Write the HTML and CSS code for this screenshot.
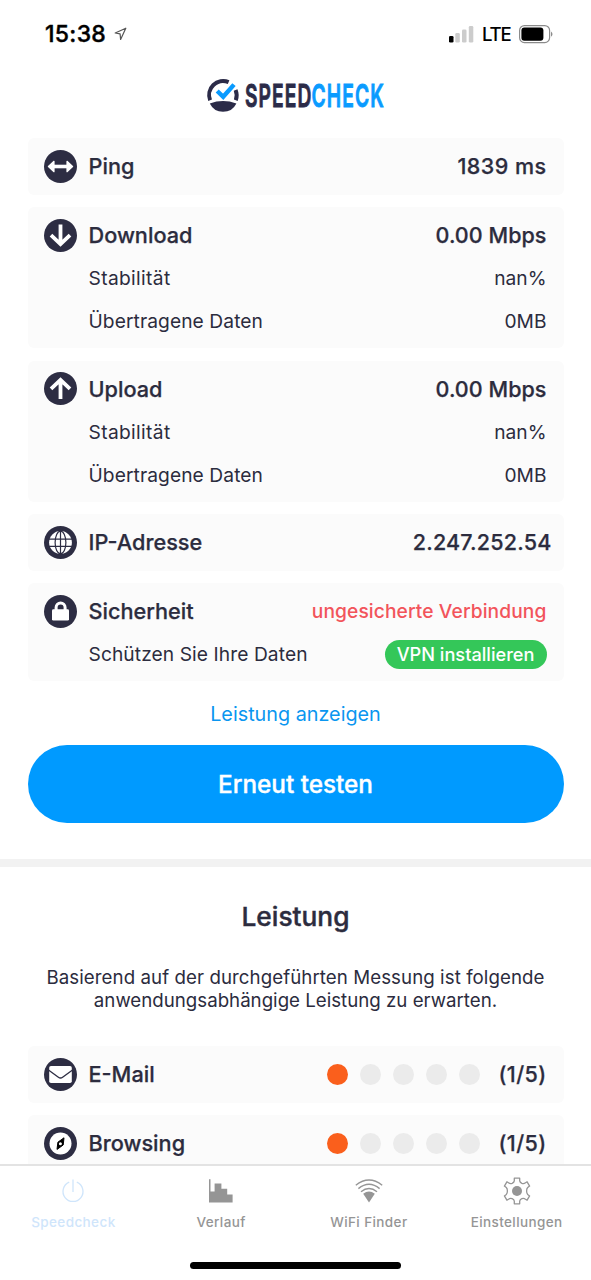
FILE: index.html
```html
<!DOCTYPE html>
<html lang="de">
<head>
<meta charset="utf-8">
<title>Speedcheck</title>
<link rel="stylesheet" href="styles.css">
</head>
<body>
<div class="screen">
  <div class="statusbar">
    <div class="status-left">
      <span class="clock">15:38</span>
      <svg class="location" viewBox="0 0 13 14" width="13" height="14"><path d="M11.8 1.2 1.2 6l4.9.9.5 5.6z" fill="none" stroke="#555" stroke-width="1.2" stroke-linejoin="round"/></svg>
    </div>
    <div class="status-right">
      <svg viewBox="0 0 27 18" width="27" height="18"><rect x="1" y="11" width="4.5" height="6.6" rx="1.3" fill="#000"/><g fill="#ccc"><rect x="7.3" y="8" width="4.5" height="9.6" rx="1.3"/><rect x="14" y="4.5" width="4.5" height="13.1" rx="1.3"/><rect x="20.8" y="1" width="4.5" height="16.6" rx="1.3"/></g></svg>
      <span class="carrier">LTE</span>
      <svg viewBox="0 0 36 20" width="36" height="20"><rect x="1.6" y="1.6" width="30" height="17" rx="4.8" fill="none" stroke="#8b8b8b" stroke-width="1.2"/><rect x="3.4" y="3.5" width="22" height="13.2" rx="3" fill="#000"/><path d="M33 7.4q3 2.7 0 5.4z" fill="#8b8b8b"/></svg>
    </div>
  </div>

  <div class="brand">
    <svg viewBox="0 0 180 36" width="180" height="36">
      <g fill="none" stroke="#2b2b48" stroke-width="4">
        <path d="M4.1 22.2A14 14 0 0 1 22.6 4.2"/>
        <path d="M29.6 12A14 14 0 0 1 29.8 22.2"/>
      </g>
      <path d="M3.8 25.4Q17 20.8 30.4 25.4Q26.3 33.8 17 33.8Q8 33.8 3.8 25.4Z" fill="#2b2b48"/>
      <path d="M11.2 13 17.2 18.8 28 6.6" fill="none" stroke="#0a9bff" stroke-width="4.4"/>
      <text class="wordmark dark" transform="translate(39 29) scale(.61 1)">SPEED</text>
      <text class="wordmark blue" transform="translate(105.500 29) scale(.61 1)">CHECK</text>
    </svg>
  </div>

  <main class="content">
    <section class="cards">
      <div class="card single">
        <div class="row head">
          <svg class="icon" viewBox="0 0 33 33"><circle cx="16.5" cy="16.5" r="16.5" fill="#2d2d43"/><path d="M8 16.5h17" stroke="#fff" stroke-width="3.6"/><path d="M4.4 16.5 10 11.3V21.7zM28.6 16.5 23 11.3V21.7z" fill="#fff" stroke="#fff" stroke-width="1.2" stroke-linejoin="round"/></svg>
          <span class="title">Ping</span><span class="value ms">1839 ms</span>
        </div>
      </div>
      <div class="card">
        <div class="row head">
          <svg class="icon" viewBox="0 0 33 33"><circle cx="16.5" cy="16.5" r="16.5" fill="#2d2d43"/><path d="M16.5 5.5V25M7 16.2l9.5 9 9.5-9" fill="none" stroke="#fff" stroke-width="3.8"/></svg>
          <span class="title">Download</span><span class="value">0.00 Mbps</span>
        </div>
        <div class="row sub"><span class="label stab">Stabilität</span><span class="detail">nan%</span></div>
        <div class="row sub"><span class="label data">Übertragene Daten</span><span class="detail">0MB</span></div>
      </div>
      <div class="card">
        <div class="row head">
          <svg class="icon" viewBox="0 0 33 33"><circle cx="16.5" cy="16.5" r="16.5" fill="#2d2d43"/><path d="M16.5 27V8M7 16.8l9.5-9 9.5 9" fill="none" stroke="#fff" stroke-width="3.8"/></svg>
          <span class="title">Upload</span><span class="value">0.00 Mbps</span>
        </div>
        <div class="row sub"><span class="label stab">Stabilität</span><span class="detail">nan%</span></div>
        <div class="row sub"><span class="label data">Übertragene Daten</span><span class="detail">0MB</span></div>
      </div>
      <div class="card single">
        <div class="row head">
          <svg class="icon" viewBox="0 0 33 33"><circle cx="16.5" cy="16.5" r="16.5" fill="#2d2d43"/><circle cx="16.5" cy="16.5" r="11.4" fill="#fff"/><g fill="none" stroke="#2d2d43" stroke-width="1.2"><path d="M16.5 5v23M5 13.1h23M5 20.3h23"/><ellipse cx="16.5" cy="16.5" rx="5.4" ry="11.4"/></g></svg>
          <span class="title">IP-Adresse</span><span class="value address">2.247.252.54</span>
        </div>
      </div>
      <div class="card">
        <div class="row head">
          <svg class="icon" viewBox="0 0 33 33"><circle cx="16.5" cy="16.5" r="16.5" fill="#2d2d43"/><rect x="8" y="14.2" width="17" height="11.4" rx="1.4" fill="#fff"/><path d="M12.1 15v-2.6a4.5 4.5 0 0 1 9 0V15" fill="none" stroke="#fff" stroke-width="3"/></svg>
          <span class="title">Sicherheit</span><span class="warning">ungesicherte Verbindung</span>
        </div>
        <div class="row sub"><span class="label data">Schützen Sie Ihre Daten</span><span class="pill">VPN installieren</span></div>
      </div>
    </section>
    <a class="link">Leistung anzeigen</a>
    <button class="cta">Erneut testen</button>
    <hr class="divider">
    <h2 class="heading">Leistung</h2>
    <p class="intro"><span class="line one">Basierend auf der durchgeführten Messung ist folgende</span><br><span class="line two">anwendungsabhängige Leistung zu erwarten.</span></p>
    <section class="cards">
      <div class="card single">
        <div class="row head">
          <svg class="icon" viewBox="0 0 33 33"><circle cx="16.5" cy="16.5" r="16.5" fill="#2d2d43"/><rect x="5.2" y="8" width="22.6" height="17" rx="1.8" fill="#fff"/><path d="M4.8 12.2 14.4 19.2q2.1 1.6 4.2 0L28.2 12.2" fill="none" stroke="#2d2d43" stroke-width="1.3"/></svg>
          <span class="title">E-Mail</span>
          <span class="dots"><i class="dot on"></i><i class="dot"></i><i class="dot"></i><i class="dot"></i><i class="dot"></i></span><span class="value score">(1/5)</span>
        </div>
      </div>
      <div class="card single">
        <div class="row head">
          <svg class="icon" viewBox="0 0 33 33"><circle cx="16.5" cy="16.5" r="16.5" fill="#2d2d43"/><circle cx="16.5" cy="16.5" r="11" fill="#fff"/><path d="M20 10.8 19.2 18 13 22.4 13.9 15.2z" fill="#000" stroke="#000" stroke-linejoin="round"/><circle cx="16.4" cy="16.8" r="1.5" fill="#fff"/></svg>
          <span class="title">Browsing</span>
          <span class="dots"><i class="dot on"></i><i class="dot"></i><i class="dot"></i><i class="dot"></i><i class="dot"></i></span><span class="value score">(1/5)</span>
        </div>
      </div>
    </section>
  </main>

  <nav class="tabbar">
    <div class="tabs">
      <div class="tab active">
        <svg class="tab-icon" viewBox="0 0 28 28"><path d="M10.2 5.2a10 10 0 1 0 7.6 0M14 2.5V15" fill="none" stroke="currentColor" stroke-width="1.3"/></svg>
        <span>Speedcheck</span>
      </div>
      <div class="tab">
        <svg class="tab-icon" viewBox="0 0 28 28"><path d="M2 2.2h1.500v12.300H7.600V6.600h6.800v5.200h5.800v5.600H25.600V25.600H2z" fill="currentColor"/></svg>
        <span>Verlauf</span>
      </div>
      <div class="tab">
        <svg class="tab-icon" viewBox="0 0 28 28"><g fill="none" stroke="currentColor" stroke-width="1.4"><path d="M.8 8.3Q14-2.2 27.2 8.3M3.4 11.6Q14 2.8 24.6 11.6M6 14.8Q14 8.2 22 14.8"/></g><path d="M8.200 16.800Q14 12.400 19.800 16.800L14 25.500z" fill="currentColor"/></svg>
        <span>WiFi Finder</span>
      </div>
      <div class="tab">
        <svg class="tab-icon" viewBox="0 0 28 28"><path d="M11.3 1.2h5.4v2.600q.2 1.600 2.200 2.500 1.900.8 3.200-.3l2-1.200 2.500 4.300-1.900 1.500q-1.100 1-1.100 3.400t1.100 3.400l1.900 1.500-2.500 4.300-2-1.200q-1.300-1.100-3.200-.3-2 .9-2.200 2.500v2.600h-5.400v-2.600q-.2-1.600-2.200-2.500-1.900-.8-3.200.3l-2 1.200-2.500-4.300 1.900-1.500q1.100-1 1.100-3.400t-1.100-3.400L1.400 9.100 3.900 4.800l2 1.200q1.300 1.100 3.200.3 2-.9 2.200-2.500z" fill="none" stroke="currentColor" stroke-width="1.3" stroke-linejoin="round"/><circle cx="14" cy="14" r="5" fill="currentColor"/></svg>
        <span>Einstellungen</span>
      </div>
    </div>
    <div class="home-indicator"></div>
  </nav>
</div>
</body>
</html>
```
FILE: styles.css
```css
* { box-sizing: border-box; }
body { margin: 0; background: #fff; font-family: Inter, "Liberation Sans", sans-serif; color: #2c2c3e; }
.screen { width: 591px; height: 1280px; display: flex; flex-direction: column; overflow: hidden; }

.statusbar { flex: none; height: 68px; padding: 0 37.5px 0 45px; display: flex; justify-content: space-between; align-items: center; color: #000; }
.status-left, .status-right { display: flex; align-items: center; }
.status-left { gap: 8px; }
.clock { font-size: 23px; font-weight: 500; letter-spacing: .3px; -webkit-text-stroke: .4px; }
.carrier { font-size: 18.6px; font-weight: 500; letter-spacing: -1.2px; margin: 0 8px 0 6.5px; }
.status-right svg:last-child { margin-left: -1px; }

.brand { flex: none; height: 70px; padding: 10px 0 0 206px; }
.brand svg { display: block; }
.wordmark { font-family: Inter, sans-serif; font-weight: 600; font-size: 31.5px; stroke-width: .9px; letter-spacing: 1.8px; }
.wordmark.dark { fill: #2b2b48; stroke: #2b2b48; }
.wordmark.blue { fill: #0a9bff; stroke: #0a9bff; }

.content { flex: 1; min-height: 0; overflow: hidden; display: flex; flex-direction: column; }
.cards { flex: none; margin: 0 27.5px; display: flex; flex-direction: column; gap: 12.5px; }
.card { background: #fbfbfb; border-radius: 6px; padding: 6.5px 17px 5.5px 16.5px; }
.card.single { padding-bottom: 7px; }
.row { height: 43px; display: flex; align-items: center; white-space: nowrap; }
.row.sub { padding: .5px 0 0 44.5px; justify-content: space-between; }
.icon { flex: none; width: 33px; height: 33px; margin-right: 11.5px; }
.title, .value { font-weight: 500; -webkit-text-stroke: .25px; }
.title { flex: 1; font-size: 21.7px; }
.value { font-size: 21.5px; letter-spacing: .05px; }
.value.ms { letter-spacing: .45px; }
.value.score { letter-spacing: .4px; }
.value.address { margin-right: -5px; letter-spacing: .2px; }
.label, .detail { font-size: 19.2px; }
.label.stab { letter-spacing: .35px; }
.label.data { letter-spacing: .08px; }
.warning { font-size: 19.2px; font-weight: 500; letter-spacing: .1px; color: #f2545b; }
.pill { height: 29px; border-radius: 15px; padding: 0 12px; display: flex; align-items: center; background: #34c759; color: #fff; font-size: 18.2px; font-weight: 500; }
.dots { display: flex; gap: 12.2px; margin-right: 18px; }
.dot { width: 21px; height: 21px; border-radius: 50%; background: #ebebeb; }
.dot.on { background: #fa5f1c; }

.link { flex: none; height: 65px; display: flex; align-items: center; justify-content: center; font-size: 19.8px; color: #0a96f0; }
.cta { flex: none; height: 78px; margin: -1px 27.5px 36px; padding: 0; border: 0; border-radius: 39px; background: #009aff; color: #fff; font: 500 24.3px Inter, sans-serif; -webkit-text-stroke: .35px; }
.divider { flex: none; width: 100%; height: 8px; margin: 0; border: 0; background: #f2f2f2; }
.heading { flex: none; margin: 0; padding-top: 34px; height: 99px; text-align: center; font-size: 26.3px; line-height: 32px; font-weight: 500; -webkit-text-stroke: .4px; }
.intro { flex: none; height: 80px; margin: 0; text-align: center; font-size: 18.7px; line-height: 23px; white-space: nowrap; }
.line.one { letter-spacing: .07px; }

.tabbar { flex: none; height: 116px; border-top: 2px solid #e3e3e3; display: flex; flex-direction: column; align-items: center; background: #fff; }
.tabs { width: 100%; height: 96px; display: grid; grid-template-columns: repeat(4, 1fr); }
.tab { display: flex; flex-direction: column; align-items: center; padding-top: 11px; gap: 9px; color: #959595; font-size: 13.5px; line-height: 17px; font-weight: 500; letter-spacing: .4px; }
.tab.active { color: #cfe5fb; }
.tab-icon { width: 28px; height: 28px; }
.tab-icon, .tab span { margin-left: -1px; }
.home-indicator { width: 211px; height: 7px; border-radius: 4px; background: #000; }
```
